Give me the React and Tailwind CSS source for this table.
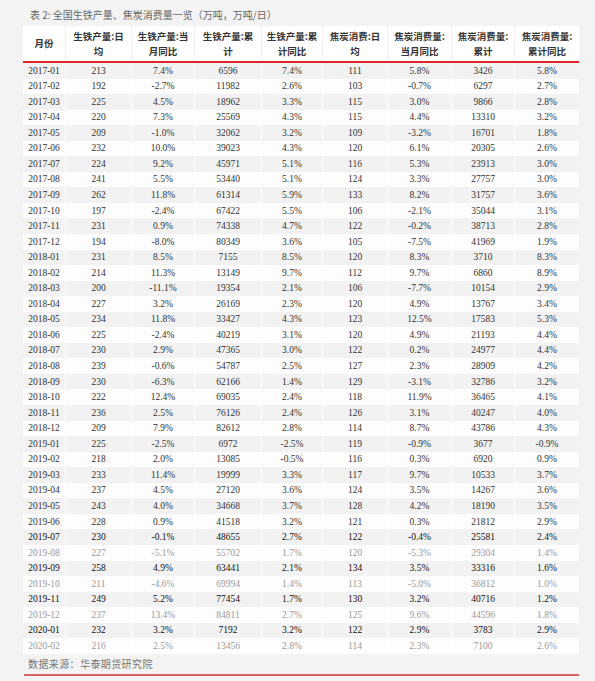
import React from 'react'

const cjk = "font-['Noto_Sans_CJK_SC',sans-serif]"
const num = "font-['Liberation_Serif','Noto_Sans_CJK_SC',serif]"

const cols = 'grid grid-cols-[43px_66px_63px_67px_61px_65px_64px_63px_64px]'

const heads = [
  ['月份'],
  ['生铁产量:日', '均'],
  ['生铁产量:当', '月同比'],
  ['生铁产量:累', '计'],
  ['生铁产量:累', '计同比'],
  ['焦炭消费:日', '均'],
  ['焦炭消费量:', '当月同比'],
  ['焦炭消费量:', '累计'],
  ['焦炭消费量:', '累计同比'],
]

const rows = `2017-01 213 7.4% 6596 7.4% 111 5.8% 3426 5.8%
2017-02 192 -2.7% 11982 2.6% 103 -0.7% 6297 2.7%
2017-03 225 4.5% 18962 3.3% 115 3.0% 9866 2.8%
2017-04 220 7.3% 25569 4.3% 115 4.4% 13310 3.2%
2017-05 209 -1.0% 32062 3.2% 109 -3.2% 16701 1.8%
2017-06 232 10.0% 39023 4.3% 120 6.1% 20305 2.6%
2017-07 224 9.2% 45971 5.1% 116 5.3% 23913 3.0%
2017-08 241 5.5% 53440 5.1% 124 3.3% 27757 3.0%
2017-09 262 11.8% 61314 5.9% 133 8.2% 31757 3.6%
2017-10 197 -2.4% 67422 5.5% 106 -2.1% 35044 3.1%
2017-11 231 0.9% 74338 4.7% 122 -0.2% 38713 2.8%
2017-12 194 -8.0% 80349 3.6% 105 -7.5% 41969 1.9%
2018-01 231 8.5% 7155 8.5% 120 8.3% 3710 8.3%
2018-02 214 11.3% 13149 9.7% 112 9.7% 6860 8.9%
2018-03 200 -11.1% 19354 2.1% 106 -7.7% 10154 2.9%
2018-04 227 3.2% 26169 2.3% 120 4.9% 13767 3.4%
2018-05 234 11.8% 33427 4.3% 123 12.5% 17583 5.3%
2018-06 225 -2.4% 40219 3.1% 120 4.9% 21193 4.4%
2018-07 230 2.9% 47365 3.0% 122 0.2% 24977 4.4%
2018-08 239 -0.6% 54787 2.5% 127 2.3% 28909 4.2%
2018-09 230 -6.3% 62166 1.4% 129 -3.1% 32786 3.2%
2018-10 222 12.4% 69035 2.4% 118 11.9% 36465 4.1%
2018-11 236 2.5% 76126 2.4% 126 3.1% 40247 4.0%
2018-12 209 7.9% 82612 2.8% 114 8.7% 43786 4.3%
2019-01 225 -2.5% 6972 -2.5% 119 -0.9% 3677 -0.9%
2019-02 218 2.0% 13085 -0.5% 116 0.3% 6920 0.9%
2019-03 233 11.4% 19999 3.3% 117 9.7% 10533 3.7%
2019-04 237 4.5% 27120 3.6% 124 3.5% 14267 3.6%
2019-05 243 4.0% 34668 3.7% 128 4.2% 18190 3.5%
2019-06 228 0.9% 41518 3.2% 121 0.3% 21812 2.9%
2019-07 230 -0.1% 48655 2.7% 122 -0.4% 25581 2.4%
2019-08 227 -5.1% 55702 1.7% 120 -5.3% 29304 1.4%
2019-09 258 4.9% 63441 2.1% 134 3.5% 33316 1.6%
2019-10 211 -4.6% 69994 1.4% 113 -5.0% 36812 1.0%
2019-11 249 5.2% 77454 1.7% 130 3.2% 40716 1.2%
2019-12 237 13.4% 84811 2.7% 125 9.6% 44596 1.8%
2020-01 232 3.2% 7192 3.2% 122 2.9% 3783 2.9%
2020-02 216 2.5% 13456 2.8% 114 2.3% 7100 2.6%`.split('\n').map(r => r.split(' '))

// the last rows of the shot are washed out on every other line
const faded = ['2019-08', '2019-10', '2019-12', '2020-02']
const dark = ['2019-07', '2019-09', '2019-11', '2020-01']

export default function App() {
  return (
    <div className="w-[595px] h-[681px] bg-[#f3f3f3] overflow-hidden pt-[9px]">
      <div className={`${cjk} text-[10px] leading-[12px] h-[17px] pl-[30px] text-[#666]`}>
        表 2:  全国生铁产量、焦炭消费量一览（万吨，万吨/日）
      </div>

      <div className="ml-[23px] w-[556px]">
        <div className={`${cols} h-[37px] bg-white border-b-2 border-[#e1262b]`}>
          {heads.map((h, i) => (
            <div key={i} className={`${cjk} flex flex-col items-center justify-center text-[9.5px] leading-[15px] font-bold text-[#333] border-r border-[#f0f0f0] last:border-r-0`}>
              {h.map((l, j) => <span key={j}>{l}</span>)}
            </div>
          ))}
        </div>

        {rows.map((r, i) => {
          const tone = faded.includes(r[0]) ? 'text-[#9a9a9a]' : dark.includes(r[0]) ? 'text-[#111]' : 'text-[#333]'
          return (
            <div key={r[0]} className={`${cols} h-[15.55px] ${i % 2 === 0 ? 'bg-[#f2f2f2]' : 'bg-[#fdfdfd]'}`}>
              {r.map((c, j) => (
                <div key={j} className={`${num} ${tone} text-[9.5px] flex items-center justify-center border-r border-white last:border-r-0`}>
                  {c}
                </div>
              ))}
            </div>
          )
        })}
      </div>

      <div className={`${cjk} text-[10px] leading-[14px] pl-[28px] pt-[3px] h-[20px] text-[#777] tracking-[0.4px]`}>
        数据来源：华泰期货研究院
      </div>
      <div className="ml-[24px] w-[555px] h-[2px] bg-[#d86464]" />
    </div>
  )
}
